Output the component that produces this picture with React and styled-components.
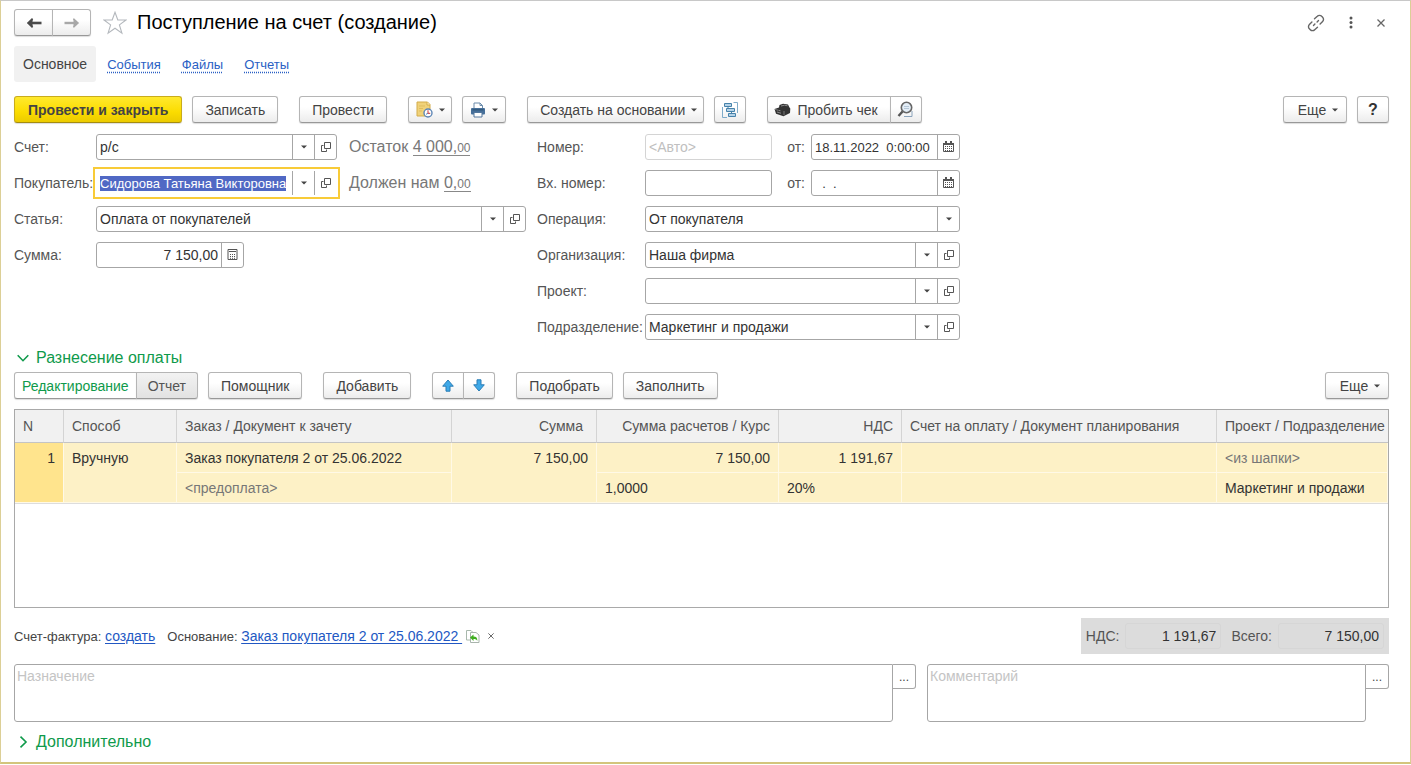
import { useEffect, useRef, useState } from "react";
import styled, { createGlobalStyle, css } from "styled-components";

const rows = [
  {
    id: 1,
    method: "Вручную",
    order: "Заказ покупателя 2 от 25.06.2022",
    offset: "<предоплата>",
    sum: "7 150,00",
    calcSum: "7 150,00",
    rate: "1,0000",
    vat: "1 191,67",
    vatRate: "20%",
    project: "<из шапки>",
    department: "Маркетинг и продажи",
  },
];

function BackIcon() {
  return (
    <svg width="16" height="12" viewBox="0 0 16 12" fill="none" stroke="#4a4a4a" strokeWidth="2.6">
      <path d="M15.500 6H4" />
      <path d="M6.500 1 1 6l5.500 5z" fill="#4a4a4a" stroke="none" />
      <path d="M6.500 2 2.500 6l4 4" strokeWidth="2" />
    </svg>
  );
}

function ForwardIcon() {
  return (
    <svg width="16" height="12" viewBox="0 0 16 12" fill="none" stroke="#a8a8a8" strokeWidth="2.400">
      <path d="M.5 6H12" />
      <path d="M9.500 1 15 6l-5.500 5z" fill="#a8a8a8" stroke="none" />
      <path d="m9.500 2 4 4-4 4" strokeWidth="1.600" />
    </svg>
  );
}

function StarIcon() {
  return (
    <svg width="24" height="24" viewBox="0 0 24 24" fill="#fff" stroke="#b4b8bd" strokeWidth="1.1">
      <path d="M12 1.300 14.800 9H23l-6.600 4.900 2.500 8.300L12 17.200l-6.900 5 2.500-8.300L1 9h8.200z" />
    </svg>
  );
}

function LinkIcon() {
  return (
    <svg width="18" height="18" viewBox="0 0 18 18" fill="none" stroke="#666" strokeWidth="1.400" strokeLinecap="round">
      <path d="M7.500 4.800 10.300 2.300a3 3 0 0 1 4.400 0l.9.9a3 3 0 0 1 0 4.300l-2.500 2.400" />
      <path d="M10.500 13.200l-2.800 2.500a3 3 0 0 1-4.400 0l-.9-.9a3 3 0 0 1 0-4.300l2.500-2.400" />
      <path d="m6.500 11.500 1.400-1.400M10.100 7.900l1.400-1.400" />
    </svg>
  );
}

function DotsIcon() {
  return (
    <svg width="4" height="13" viewBox="0 0 4 13" fill="#555">
      <circle cx="2" cy="2" r="1.500" />
      <circle cx="2" cy="6.500" r="1.500" />
      <circle cx="2" cy="11" r="1.500" />
    </svg>
  );
}

function CloseIcon({ size = 8 }) {
  return (
    <svg width={size} height={size} viewBox="0 0 8 8" fill="none" stroke="#666" strokeWidth="1.300">
      <path d="m.5.5 7 7M7.500.5l-7 7" />
    </svg>
  );
}

function CaretIcon() {
  return (
    <svg width="6" height="4" viewBox="0 0 6 4" fill="#444">
      <path d="M0 .5h6L3 3.500z" />
    </svg>
  );
}

function OpenIcon() {
  return (
    <svg width="10" height="10" viewBox="0 0 10 10" fill="none" stroke="#555" strokeWidth="1">
      <path d="M3.500.5h6v6h-6z" />
      <path d="M2.500 3.500h-2v6h5v-2" />
    </svg>
  );
}

function CalendarIcon() {
  return (
    <svg width="11" height="12" viewBox="0 0 11 12">
      <path d="M.5 2.500h10v8H.5z" fill="#fff" stroke="#555" />
      <path d="M0 2h11v2H0zM2 0h2v3H2zM7 0h2v3H7z" fill="#555" />
      <path d="M2 5.500h7M2 7.500h7M2 9.500h7" stroke="#555" strokeDasharray="1 1" />
    </svg>
  );
}

function CalcIcon() {
  return (
    <svg width="11" height="12" viewBox="0 0 11 12" fill="none" stroke="#555">
      <path d="M1 .5h9v10H1z" />
      <path d="M2 2.500h7" />
      <path d="M3 5.500h6M3 7.500h6M3 9.300h6" strokeDasharray="1 1" />
    </svg>
  );
}

function JournalIcon() {
  return (
    <svg width="17" height="17" viewBox="0 0 17 17">
      <path d="M1 1h10.500L14 3.500V15H1z" fill="#f0d27a" stroke="#d3ac4a" />
      <path d="M11 1v3h3" fill="#fff3c8" stroke="#d3ac4a" />
      <path d="M3 5h6M3 7.500h4M3 10h3" stroke="#dfbd5e" />
      <circle cx="12" cy="12" r="4" fill="#fff" stroke="#5d86b5" strokeWidth="1.400" />
      <path d="M12 9.300v3h2.200" fill="none" stroke="#d0555a" strokeWidth="1.200" />
      <path d="m12 12.300-2 1" stroke="#5d86b5" />
    </svg>
  );
}

function PrintIcon() {
  return (
    <svg width="16" height="16" viewBox="0 0 16 16">
      <path d="M4 1h6l2.500 2.500V7H4z" fill="#fff" stroke="#6c8cab" />
      <path d="M10 1v2.500h2.500" fill="none" stroke="#6c8cab" />
      <rect x="1" y="6" width="14" height="6.500" rx="1" fill="#47709a" />
      <path d="M2.500 7.800h11" stroke="#2f5579" strokeWidth="1.200" />
      <path d="M4 10.500h8V15H4z" fill="#fff" stroke="#53779c" />
    </svg>
  );
}

function StructureIcon() {
  return (
    <svg width="16" height="16" viewBox="0 0 16 16" fill="#b5d3e8" stroke="#4782aa">
      <path d="M2.500 1.500h7v3h-7zM4.500 6.500h8v3h-8zM6.500 11.500h7v3h-7z" />
      <path d="M6 4.500v2M9.500 9.500v2" />
      <path d="M.5 5v10.500H5M11.500.5h4V11" fill="none" stroke="#7fabc9" />
    </svg>
  );
}

function CashIcon() {
  return (
    <svg width="17" height="14" viewBox="0 0 17 14">
      <path d="M.5 6 5 4.500l.5-2.500L9 .8l5 .7 1.500 3 .8 1L16 10l-6.500 3.200-7.500-2.500z" fill="#333" />
      <path d="m7 3 3.500-.8 3 .6" stroke="#8a8a8a" fill="none" />
      <path d="m1.500 6.500 5 1.300" stroke="#b5b5b5" strokeDasharray="1 1" />
      <path d="m3 9 4 1.200" stroke="#8a8a8a" />
      <path d="M10 8v4" stroke="#777" />
    </svg>
  );
}

function SearchCheckIcon() {
  return (
    <svg width="17" height="17" viewBox="0 0 17 17" fill="none">
      <path d="M7 15.500h8V10" stroke="#8aa3bb" />
      <circle cx="9.500" cy="6.500" r="5.200" fill="#e3edf6" stroke="#666" strokeWidth="1.600" />
      <path d="M7 5.500h5M7 7.500h5" stroke="#b5c7d8" />
      <path d="m5.500 10.500-4 4.500" stroke="#555" strokeWidth="2.400" />
    </svg>
  );
}

function MoveIcon({ down }) {
  return (
    <svg width="12" height="13" viewBox="0 0 12 13" fill="#3fa9e8" stroke="#2b7db5">
      <path d={down ? "M4 .8h4v5h3.300L6 12 .7 5.800H4z" : "M6 1l5.300 6.200H8v5H4v-5H.7z"} />
    </svg>
  );
}

function FillIcon() {
  return (
    <svg width="14" height="13" viewBox="0 0 14 13" fill="none">
      <path d="M.5 10V.5h4.500l2 2V10z" fill="#fff" stroke="#a8b8ac" />
      <path d="M4.500 12.500v-10h5.500l3 2.500v7.500z" fill="#fff" stroke="#a8b4ac" />
      <path d="m4 7.500 3.500-3v2c2.800 0 4 1.400 3.800 4.500-.7-1.500-1.700-2-3.800-2v2z" fill="#3fae1f" />
    </svg>
  );
}

function ChevronIcon({ open }) {
  return (
    <svg width="12" height="12" viewBox="0 0 12 12" fill="none" stroke="#0f9a4b" strokeWidth="1.600">
      <path d={open ? "M.7 3.300 6 8.700l5.300-5.400" : "M3.500.7 9 6l-5.500 5.300"} />
    </svg>
  );
}

// input with a drop-down button and an "open card" button
function ComboField({ id, value, inputRef, width, small }) {
  return (
    <Field $width={width}>
      <Input id={id} ref={inputRef} $small={small} defaultValue={value} autoComplete="off" />
      <FieldButton type="button" aria-label="Выбрать"><CaretIcon /></FieldButton>
      <FieldButton type="button" aria-label="Открыть"><OpenIcon /></FieldButton>
    </Field>
  );
}

function DateField({ id, value }) {
  return (
    <Field $width="149px">
      <Input id={id} $small defaultValue={value} />
      <FieldButton type="button" aria-label="Календарь"><CalendarIcon /></FieldButton>
    </Field>
  );
}

function App() {
  const buyerRef = useRef(null);
  const [allocationOpen, setAllocationOpen] = useState(true);
  const [extraOpen, setExtraOpen] = useState(false);

  useEffect(() => {
    // backward selection keeps the start of a long name in view
    const input = buyerRef.current;
    input.focus();
    input.setSelectionRange(0, input.value.length, "backward");
    input.scrollLeft = 0;
  }, []);

  return (
    <Window>
      <GlobalStyle />
      <TitleBar>
        <ButtonStrip>
          <NavButton aria-label="Назад"><BackIcon /></NavButton>
          <NavButton aria-label="Вперед"><ForwardIcon /></NavButton>
        </ButtonStrip>
        <GhostButton aria-label="В избранное"><StarIcon /></GhostButton>
        <Title>Поступление на счет (создание)</Title>
        <WindowTools>
          <GhostButton aria-label="Получить ссылку"><LinkIcon /></GhostButton>
          <GhostButton aria-label="Меню"><DotsIcon /></GhostButton>
          <GhostButton aria-label="Закрыть"><CloseIcon /></GhostButton>
        </WindowTools>
      </TitleBar>

      <Tabs>
        <CurrentTab>Основное</CurrentTab>
        <TabLink href="#events">События</TabLink>
        <TabLink href="#files">Файлы</TabLink>
        <TabLink href="#reports">Отчеты</TabLink>
      </Tabs>

      <Toolbar>
        <Group>
          <PrimaryButton>Провести и закрыть</PrimaryButton>
          <Button>Записать</Button>
        </Group>
        <Button>Провести</Button>
        <Group>
          <IconButton $menu aria-label="Журнал"><JournalIcon /><CaretIcon /></IconButton>
          <IconButton $menu aria-label="Печать"><PrintIcon /><CaretIcon /></IconButton>
        </Group>
        <Group>
          <MenuButton>Создать на основании<CaretIcon /></MenuButton>
          <IconButton aria-label="Структура подчиненности"><StructureIcon /></IconButton>
        </Group>
        <ButtonStrip>
          <ReceiptButton><CashIcon />Пробить чек</ReceiptButton>
          <IconButton aria-label="Найти чек"><SearchCheckIcon /></IconButton>
        </ButtonStrip>
        <RightGroup>
          <MenuButton>Еще<CaretIcon /></MenuButton>
          <HelpButton aria-label="Справка">?</HelpButton>
        </RightGroup>
      </Toolbar>

      <Form>
        <FormColumn $label="82px">
          <Label htmlFor="account">Счет:</Label>
          <Line>
            <ComboField id="account" value="р/с" width="241px" />
            <Balance>Остаток <Amount href="#balance">4 000,<small>00</small></Amount></Balance>
          </Line>
          <Label htmlFor="buyer">Покупатель:</Label>
          <Line>
            <ComboField id="buyer" value="Сидорова Татьяна Викторовна" inputRef={buyerRef} width="241px" small />
            <Balance>Должен нам <Amount href="#debt">0,<small>00</small></Amount></Balance>
          </Line>
          <Label htmlFor="item">Статья:</Label>
          <ComboField id="item" value="Оплата от покупателей" />
          <Label htmlFor="sum">Сумма:</Label>
          <Field $width="148px">
            <Input id="sum" $right defaultValue="7 150,00" />
            <FieldButton type="button" aria-label="Калькулятор"><CalcIcon /></FieldButton>
          </Field>
        </FormColumn>

        <FormColumn $label="108px">
          <Label htmlFor="number">Номер:</Label>
          <Line>
            <Field $width="127px" $muted><Input id="number" placeholder="<Авто>" /></Field>
            <DateLabel htmlFor="date">от:</DateLabel>
            <DateField id="date" value="18.11.2022  0:00:00" />
          </Line>
          <Label htmlFor="inNumber">Вх. номер:</Label>
          <Line>
            <Field $width="127px"><Input id="inNumber" /></Field>
            <DateLabel htmlFor="inDate">от:</DateLabel>
            <DateField id="inDate" value="  .  ." />
          </Line>
          <Label htmlFor="operation">Операция:</Label>
          <Field>
            <Select id="operation" defaultValue="buyer">
              <option value="buyer">От покупателя</option>
              <option value="other">Прочее</option>
            </Select>
            <SelectArrow><CaretIcon /></SelectArrow>
          </Field>
          <Label htmlFor="company">Организация:</Label>
          <ComboField id="company" value="Наша фирма" />
          <Label htmlFor="project">Проект:</Label>
          <ComboField id="project" value="" />
          <Label htmlFor="department">Подразделение:</Label>
          <ComboField id="department" value="Маркетинг и продажи" />
        </FormColumn>
      </Form>

      <SectionToggle onClick={() => setAllocationOpen(!allocationOpen)} aria-expanded={allocationOpen}>
        <ChevronIcon open={allocationOpen} />Разнесение оплаты
      </SectionToggle>

      {allocationOpen && (
        <>
          <Toolbar>
            <Group>
              <ButtonStrip>
                <ModeButton $active>Редактирование</ModeButton>
                <ModeButton>Отчет</ModeButton>
              </ButtonStrip>
              <Button>Помощник</Button>
            </Group>
            <Button>Добавить</Button>
            <ButtonStrip>
              <IconButton aria-label="Вверх"><MoveIcon /></IconButton>
              <IconButton aria-label="Вниз"><MoveIcon down /></IconButton>
            </ButtonStrip>
            <Group>
              <Button>Подобрать</Button>
              <Button>Заполнить</Button>
            </Group>
            <RightGroup>
              <MenuButton>Еще<CaretIcon /></MenuButton>
            </RightGroup>
          </Toolbar>

          <TableBox>
            <Table>
              <colgroup>
                <Col $w="49px" />
                <Col $w="113px" />
                <Col />
                <Col $w="145px" />
                <Col $w="182px" />
                <Col $w="123px" />
                <Col $w="315px" />
                <Col $w="171px" />
              </colgroup>
              <thead>
                <tr>
                  <Th>N</Th>
                  <Th>Способ</Th>
                  <Th>Заказ / Документ к зачету</Th>
                  <Th $right $inset>Сумма</Th>
                  <Th $right>Сумма расчетов / Курс</Th>
                  <Th $right>НДС</Th>
                  <Th>Счет на оплату / Документ планирования</Th>
                  <Th>Проект / Подразделение</Th>
                </tr>
              </thead>
              {rows.map((row) => (
                <tbody key={row.id}>
                  <tr>
                    <Td rowSpan={2} $right $number>{row.id}</Td>
                    <Td rowSpan={2}>{row.method}</Td>
                    <Td>{row.order}</Td>
                    <Td rowSpan={2} $right>{row.sum}</Td>
                    <Td $right>{row.calcSum}</Td>
                    <Td $right>{row.vat}</Td>
                    <Td />
                    <Td $muted>{row.project}</Td>
                  </tr>
                  <tr>
                    <Td $muted>{row.offset}</Td>
                    <Td>{row.rate}</Td>
                    <Td>{row.vatRate}</Td>
                    <Td />
                    <Td>{row.department}</Td>
                  </tr>
                </tbody>
              ))}
            </Table>
          </TableBox>
        </>
      )}

      <Footer>
        <FooterText>Счет-фактура: <Link href="#invoice">создать</Link></FooterText>
        <FooterText>Основание: <Link href="#order">Заказ покупателя 2 от 25.06.2022 </Link></FooterText>
        <FooterIcons>
          <GhostButton aria-label="Заполнить по основанию"><FillIcon /></GhostButton>
          <GhostButton aria-label="Очистить основание"><CloseIcon size={6} /></GhostButton>
        </FooterIcons>
        <Totals>
          <label htmlFor="totalVat">НДС:</label>
          <TotalInput id="totalVat" $width="96px" value="1 191,67" readOnly />
          <label htmlFor="total">Всего:</label>
          <TotalInput id="total" $width="106px" value="7 150,00" readOnly />
        </Totals>
      </Footer>

      <Notes>
        <Note>
          <TextArea aria-label="Назначение" placeholder="Назначение" />
          <NoteButton aria-label="Изменить назначение">...</NoteButton>
        </Note>
        <Note>
          <TextArea aria-label="Комментарий" placeholder="Комментарий" />
          <NoteButton aria-label="Изменить комментарий">...</NoteButton>
        </Note>
      </Notes>

      <SectionToggle onClick={() => setExtraOpen(!extraOpen)} aria-expanded={extraOpen}>
        <ChevronIcon open={extraOpen} />Дополнительно
      </SectionToggle>
    </Window>
  );
}

export default App;

const GlobalStyle = createGlobalStyle`
* {
    box-sizing: border-box;
}

body {
    margin: 0;
    background-color: #fff;
}

body, button, input, select, textarea {
    font-family: "Liberation Sans", Arial, sans-serif;
    font-size: 14px;
    color: #444;
}
`;

const Window = styled.div`
display: flex;
flex-direction: column;
min-height: calc(100vh - 1px);
padding: 8px 21px 6px 13px;
border: 1px solid #dccf96;
border-top-color: #c8c8c8;
border-bottom: 2px solid #d3c57c;
`;

const TitleBar = styled.header`
display: flex;
align-items: center;
height: 27px;
`;

const Title = styled.h1`
margin: 0 0 0 10px;
font-size: 20px;
font-weight: normal;
color: #000;
`;

const WindowTools = styled.div`
display: flex;
align-items: center;
gap: 24px;
margin-left: auto;
margin-right: 4px;
`;

const GhostButton = styled.button`
display: flex;
align-items: center;
padding: 0;
border: none;
background: none;
cursor: pointer;
`;

const Tabs = styled.nav`
display: flex;
align-items: center;
gap: 21px;
height: 36px;
margin: 10px 0 14px;
`;

const CurrentTab = styled.span`
padding: 0 9px;
margin-right: -10px;
line-height: 36px;
border-radius: 3px;
background-color: #f1f1f1;
`;

const TabLink = styled.a`
font-size: 13px;
color: #2a5fc4;
text-decoration: underline dotted;
text-underline-offset: 3px;
`;

const Toolbar = styled.div`
display: flex;
align-items: center;
gap: 21px;
`;

const Group = styled.div`
display: flex;
gap: 10px;
`;

const RightGroup = styled(Group)`
margin-left: auto;
`;

const Button = styled.button`
display: flex;
align-items: center;
justify-content: center;
height: 27px;
padding: 0 12px;
border: 1px solid #b5b5b5;
border-bottom-color: #989898;
border-radius: 3px;
background: linear-gradient(#fff 40%, #ececec);
box-shadow: 0 1px 1px #ddd;
white-space: nowrap;
cursor: pointer;
`;

const PrimaryButton = styled(Button)`
padding: 0 13px;
font-weight: bold;
border-color: #c9ac1c;
border-bottom-color: #a58c0f;
background: linear-gradient(#ffe92e, #fbdc00 60%, #eccb00);
`;

const MenuButton = styled(Button)`
gap: 6px;
min-width: 64px;
padding-right: 6px;
`;

const IconButton = styled(Button)`
width: ${({ $menu }) => ($menu ? "44px" : "32px")};
gap: 6px;
padding: 0;
`;

const NavButton = styled(Button)`
width: 39px;
padding: 0;
`;

const HelpButton = styled(Button)`
width: 32px;
padding: 0;
font-size: 16px;
font-weight: bold;
color: #333;
`;

const ReceiptButton = styled(Button)`
gap: 6px;
padding: 0 12px 0 6px;
`;

const ModeButton = styled(Button)`
padding: 0 ${({ $active }) => ($active ? "7px" : "11px")};
color: ${({ $active }) => ($active ? "#0f9a4b" : "#555")};
background: ${({ $active }) => ($active ? "#fff" : "linear-gradient(#f2f2f2, #e2e2e2)")};
`;

const ButtonStrip = styled.div`
display: flex;

> button:not(:first-child) {
    margin-left: -1px;
    border-top-left-radius: 0;
    border-bottom-left-radius: 0;
}

> button:not(:last-child) {
    border-top-right-radius: 0;
    border-bottom-right-radius: 0;
}

+ ${GhostButton} {
    margin-left: 12px;
}
`;

const Form = styled.form`
display: flex;
align-items: flex-start;
gap: 11px;
margin: 11px 0 8px;
`;

const FormColumn = styled.div`
display: grid;
grid-template-columns: ${({ $label }) => $label} auto;
grid-auto-rows: 26px;
align-items: center;
row-gap: 10px;

&:first-child {
    flex: 0 1 512px;
}

&:last-child {
    flex: 0 1 423px;
}
`;

const Label = styled.label`
white-space: nowrap;
color: #555;
`;

const DateLabel = styled(Label)`
margin-left: auto;
margin-right: 6px;
`;

const Line = styled.div`
display: flex;
align-items: center;
`;

const Field = styled.div`
display: flex;
width: ${({ $width }) => $width || "100%"};
height: 26px;
border: 1px solid ${({ $muted }) => ($muted ? "#d4d4d4" : "#a6a6a6")};
border-radius: 3px;
background-color: #fff;

&:focus-within {
    border-color: transparent;
    border-radius: 0;
    outline: 2px solid #f8cb38;
    outline-offset: 1px;
}
`;

const inputText = css`
flex: 1;
min-width: 0;
padding: 0 3px;
border: none;
outline: none;
background: none;
color: #333;
`;

const Input = styled.input`
${inputText}
font-size: ${({ $small }) => ($small ? "13px" : "14px")};
text-align: ${({ $right }) => ($right ? "right" : "left")};
white-space: pre;

&::placeholder {
    color: #c0c0c0;
}

&::selection {
    color: #fff;
    background-color: #5068c4;
}
`;

const Select = styled.select`
${inputText}
appearance: none;
`;

const FieldButton = styled.button`
display: flex;
align-items: center;
justify-content: center;
flex: none;
width: 22px;
padding: 0;
border: none;
border-left: 1px solid #a6a6a6;
background: none;
cursor: pointer;
`;

const SelectArrow = styled.span`
display: flex;
align-items: center;
justify-content: center;
width: 22px;
border-left: 1px solid #a6a6a6;
pointer-events: none;
`;

const Balance = styled.span`
margin-left: 12px;
font-size: 16px;
color: #777;
white-space: nowrap;
`;

const Amount = styled.a`
color: inherit;
text-decoration: none;
border-bottom: 1px solid #888;

small {
    font-size: 12px;
}
`;

const SectionToggle = styled.button`
display: flex;
align-items: center;
align-self: flex-start;
gap: 7px;
height: 20px;
margin-bottom: 4px;
padding: 0 3px;
border: none;
background: none;
font-size: 16px;
color: #0f9a4b;
cursor: pointer;
`;

const TableBox = styled.div`
flex: 1;
margin-top: 10px;
border: 1px solid #a9a9a9;
overflow: auto;
`;

const Table = styled.table`
width: 100%;
table-layout: fixed;
border-collapse: separate;
border-spacing: 0;
border-bottom: 1px solid #ddd;
`;

const Col = styled.col`
width: ${({ $w }) => $w || "auto"};
`;

const Th = styled.th`
height: 33px;
padding: 0 ${({ $inset }) => ($inset ? "13px" : "8px")} 0 8px;
border-right: 1px solid #d4d4d4;
border-bottom: 1px solid #c4c4c4;
background-color: #f1f1f1;
font-weight: normal;
text-align: ${({ $right }) => ($right ? "right" : "left")};
white-space: nowrap;
color: #555;

&:last-child {
    padding-right: 0;
    border-right: none;
}
`;

const Td = styled.td`
height: 30px;
padding: ${({ rowSpan }) => (rowSpan ? "7px" : "0")} 8px 0;
border-right: 1px solid #fff9e6;
border-bottom: 1px solid #fff9e6;
background-color: ${({ $number }) => ($number ? "#ffe48d" : "#fdf1c6")};
text-align: ${({ $right }) => ($right ? "right" : "left")};
vertical-align: ${({ rowSpan }) => (rowSpan ? "top" : "middle")};
white-space: nowrap;
color: ${({ $muted }) => ($muted ? "#777" : "#333")};
`;

const Footer = styled.div`
display: flex;
align-items: center;
gap: 12px;
margin: 10px 0;
`;

const FooterText = styled.span`
font-size: 13px;
white-space: pre;
`;

const Link = styled.a`
font-size: 14px;
color: #2258c3;
text-underline-offset: 2px;
`;

const FooterIcons = styled.div`
display: flex;
gap: 8px;
margin-left: -8px;
`;

const Totals = styled.div`
display: flex;
align-items: center;
gap: 6px;
height: 36px;
margin-left: auto;
padding: 0 5px;
background-color: #dcdcdc;
color: #555;
`;

const TotalInput = styled.input`
width: ${({ $width }) => $width};
height: 26px;
padding: 0 4px;
border: 1px solid #d6d6d6;
border-radius: 3px;
background: none;
text-align: right;
color: #333;

& + label {
    margin-left: 4px;
}
`;

const Notes = styled.div`
display: grid;
grid-template-columns: 41fr 21fr;
gap: 11px;
margin-bottom: 10px;
`;

const Note = styled.div`
display: flex;
align-items: flex-start;
`;

const TextArea = styled.textarea`
flex: 1;
min-width: 0;
height: 58px;
padding: 3px 2px;
border: 1px solid #a6a6a6;
border-radius: 3px 0 3px 3px;
resize: none;
outline: none;

&::placeholder {
    color: #c4c4c4;
}
`;

const NoteButton = styled.button`
width: 23px;
height: 25px;
padding: 0;
border: 1px solid #a6a6a6;
border-left: none;
border-radius: 0 3px 3px 0;
background: #fff;
font-size: 12px;
cursor: pointer;
`;
